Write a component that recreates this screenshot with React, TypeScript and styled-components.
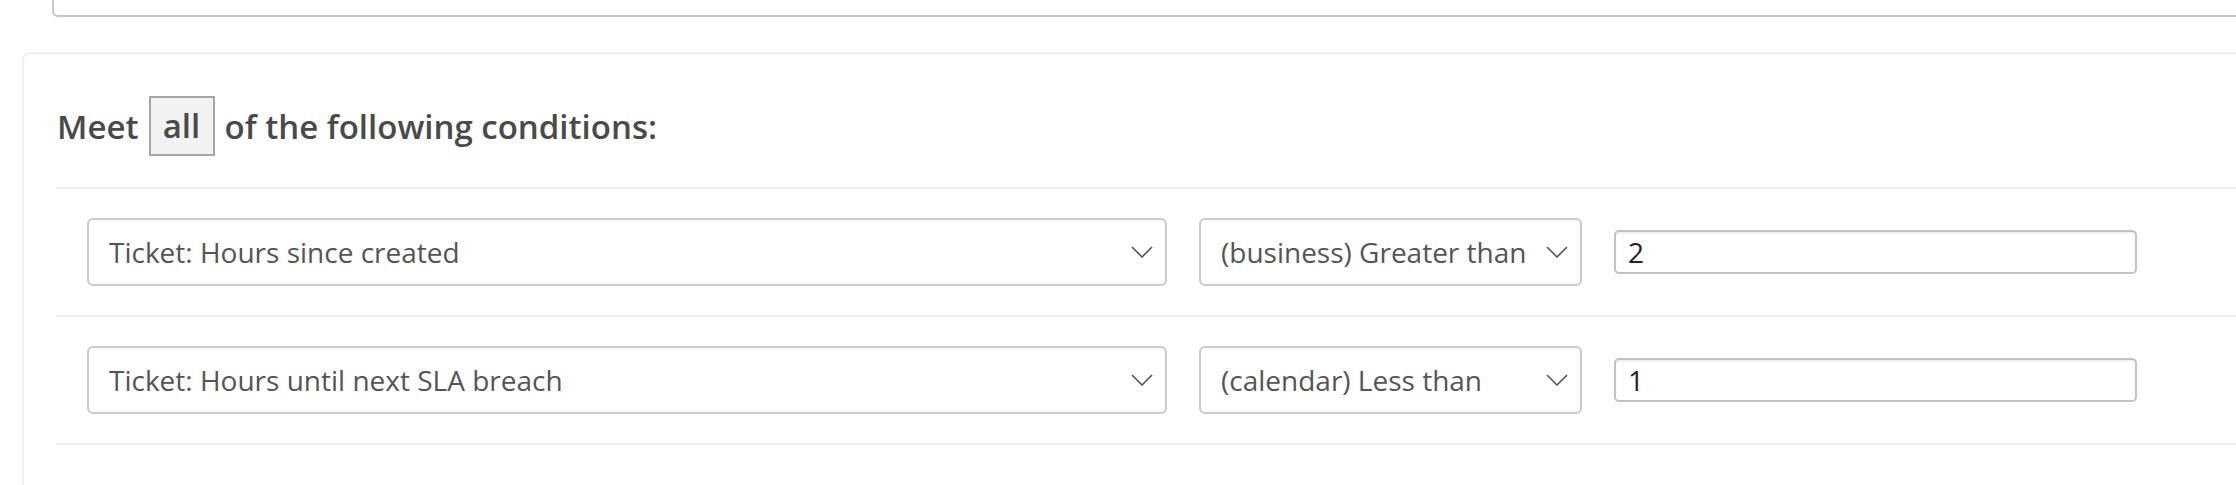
import React from "react";
import styled, { createGlobalStyle } from "styled-components";

const GlobalStyle = createGlobalStyle`
  html, body {
    margin: 0;
    padding: 0;
    background: #ffffff;
    overflow: hidden;
  }
  body {
    font-family: "Open Sans", "Noto Sans", Arial, sans-serif;
  }
`;

const Page = styled.div`
  width: 2236px;
  height: 485px;
  overflow: hidden;
  padding-left: 22px;
  box-sizing: border-box;
`;

const TopCard = styled.div`
  margin-left: 30px;
  margin-right: -40px;
  height: 17px;
  box-sizing: border-box;
  border: 2px solid #c6c6c6;
  border-top: none;
  border-radius: 0 0 6px 6px;
`;

const Card = styled.section`
  margin-top: 35px;
  margin-right: -40px;
  min-height: 600px;
  box-sizing: border-box;
  border: 2px solid #efefef;
  border-radius: 8px;
  padding-left: 32px;
  background: #ffffff;
`;

const Heading = styled.h2`
  margin: 0;
  padding: 42px 0 31px 1px;
  display: flex;
  align-items: center;
  gap: 10px;
  font-size: 33px;
  font-weight: 600;
  color: #4a4a4a;
  border-bottom: 2px solid #efefef;
  line-height: 1;
`;

const Toggle = styled.span`
  display: inline-flex;
  align-items: center;
  justify-content: center;
  box-sizing: border-box;
  width: 66px;
  height: 60px;
  padding-bottom: 2px;
  background: #f2f2f2;
  border: 2px solid #a6a6a6;
  font-weight: 600;
  color: #4a4a4a;
`;

const Row = styled.div`
  display: flex;
  align-items: center;
  gap: 32px;
  height: 128px;
  box-sizing: border-box;
  padding-left: 31px;
  border-bottom: 2px solid #efefef;
`;

const SelectBox = styled.div<{ $width: number }>`
  display: flex;
  align-items: center;
  justify-content: space-between;
  box-sizing: border-box;
  width: ${(p) => p.$width}px;
  height: 68px;
  padding: 0 12px 0 20px;
  border: 2px solid #cacaca;
  border-radius: 6px;
  background: #ffffff;
  font-size: 28px;
  color: #555555;
  white-space: nowrap;
`;

const Chevron = () => (
  <svg width="22" height="12" viewBox="0 0 22 12" fill="none">
    <path d="M1 1 L11 11 L21 1" stroke="#555" strokeWidth="1.6" />
  </svg>
);

const ValueInput = styled.input`
  box-sizing: border-box;
  width: 523px;
  height: 44px;
  padding: 0 0 0 12px;
  border: 2px solid #c2c2c2;
  border-radius: 5px;
  box-shadow: inset 0 2px 2px rgba(0, 0, 0, 0.06);
  font-family: "Open Sans", "Noto Sans", Arial, sans-serif;
  font-size: 28px;
  color: #222222;
  background: #ffffff;
  outline: none;
`;

const conditions = [
  { field: "Ticket: Hours since created", op: "(business) Greater than", value: "2" },
  { field: "Ticket: Hours until next SLA breach", op: "(calendar) Less than", value: "1" },
];

export default function App() {
  return (
    <>
      <GlobalStyle />
      <Page>
        <TopCard />
        <Card>
          <Heading>
            <span>Meet</span>
            <Toggle>all</Toggle>
            <span>of the following conditions:</span>
          </Heading>
          {conditions.map((c) => (
            <Row key={c.field}>
              <SelectBox $width={1080}>
                <span>{c.field}</span>
                <Chevron />
              </SelectBox>
              <SelectBox $width={383}>
                <span>{c.op}</span>
                <Chevron />
              </SelectBox>
              <ValueInput defaultValue={c.value} />
            </Row>
          ))}
        </Card>
      </Page>
    </>
  );
}
